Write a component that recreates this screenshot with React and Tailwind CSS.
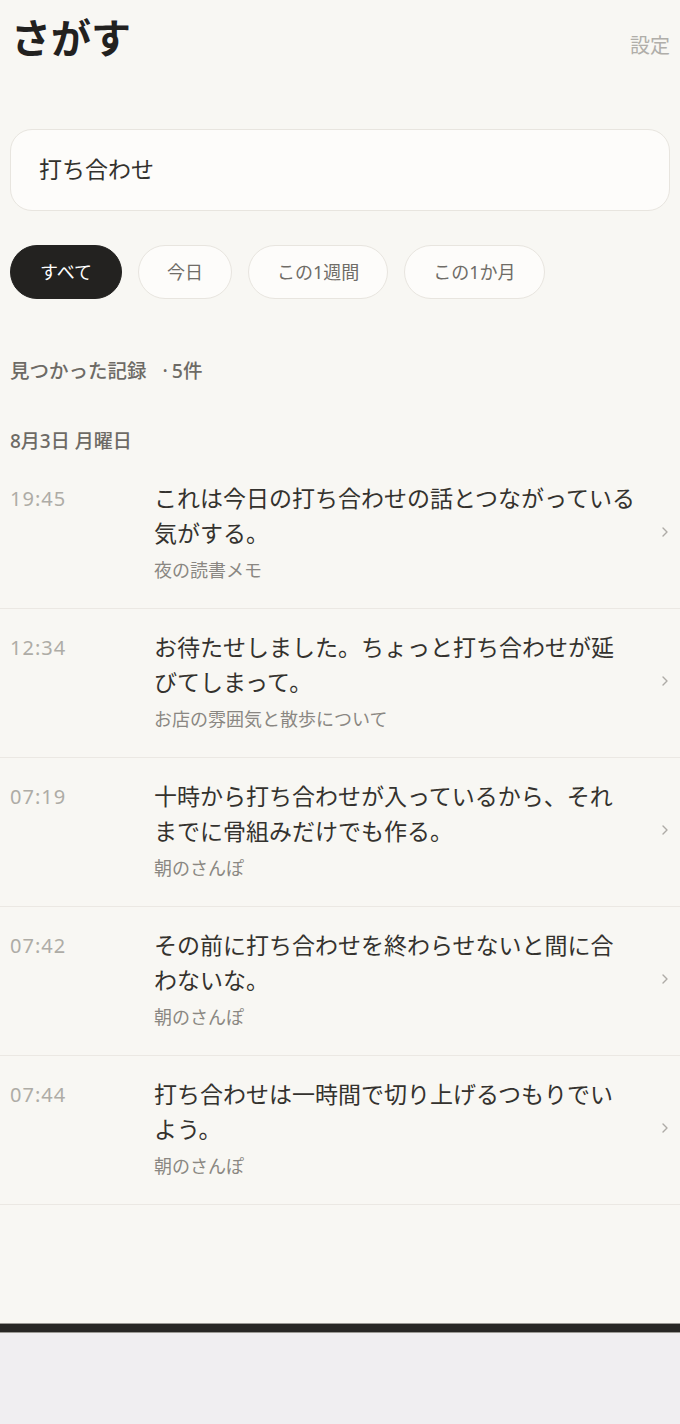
import React, { useState } from "react";

const results = [
  {
    time: "19:45",
    lines: ["これは今日の打ち合わせの話とつながっている", "気がする。"],
    source: "夜の読書メモ",
  },
  {
    time: "12:34",
    lines: ["お待たせしました。ちょっと打ち合わせが延", "びてしまって。"],
    source: "お店の雰囲気と散歩について",
  },
  {
    time: "07:19",
    lines: ["十時から打ち合わせが入っているから、それ", "までに骨組みだけでも作る。"],
    source: "朝のさんぽ",
  },
  {
    time: "07:42",
    lines: ["その前に打ち合わせを終わらせないと間に合", "わないな。"],
    source: "朝のさんぽ",
  },
  {
    time: "07:44",
    lines: ["打ち合わせは一時間で切り上げるつもりでい", "よう。"],
    source: "朝のさんぽ",
  },
];

const filters = ["すべて", "今日", "この1週間", "この1か月"];

const Chevron = () => (
  <svg width="8" height="14" viewBox="0 0 8 14" fill="none" className="shrink-0">
    <path d="M2 3l4 4-4 4" stroke="#aeaba6" strokeWidth="1.4" strokeLinecap="round" strokeLinejoin="round" />
  </svg>
);

const App = () => {
  const [query, setQuery] = useState("打ち合わせ");
  const [active, setActive] = useState("すべて");

  return (
    <div
      className="flex flex-col h-[1424px] bg-[#f0eef1]"
      style={{ fontFamily: '"Noto Sans", "Noto Sans CJK JP", sans-serif' }}
    >
      <div className="flex-1 bg-[#f8f7f3]">
        {/* header */}
        <div className="flex justify-between items-start pl-[11px] pr-[10px] pt-[12px]">
          <h1 className="text-[40px] leading-[52px] font-bold text-[#22211f]">さがす</h1>
          <button className="mt-[20px] text-[20px] leading-[28px] text-[#b0aea9]">設定</button>
        </div>

        {/* search */}
        <div className="px-[10px] mt-[65px]">
          <input
            value={query}
            onChange={(e) => setQuery(e.target.value)}
            className="w-full h-[82px] rounded-[22px] border border-[#e8e5df] bg-[#fdfcfa] px-[28px] pb-[4px] text-[23px] text-[#33312d] outline-none"
          />
        </div>

        {/* filters */}
        <div className="flex gap-[16px] px-[10px] mt-[34px]">
          {filters.map((f) => (
            <button
              key={f}
              onClick={() => setActive(f)}
              className={
                active === f
                  ? "h-[54px] px-[29px] rounded-full bg-[#232220] text-white text-[18px] border border-[#232220]"
                  : "h-[54px] px-[28px] rounded-full bg-[#fdfcfa] text-[#6f6c67] text-[18px] border border-[#e8e5df]"
              }
            >
              {f}
            </button>
          ))}
        </div>

        <p className="px-[10px] mt-[60px] text-[19.5px] leading-[24px] font-medium text-[#6d6a65]">
          見つかった記録<span className="ml-[16px] mr-[4px]">·</span>5件
        </p>
        <p className="px-[10px] mt-[46px] text-[19px] leading-[24px] font-medium text-[#6d6a65]">
          8月3日 月曜日
        </p>

        {/* results */}
        <ul className="mt-[7px]">
          {results.map((r, i) => (
            <li key={i} className="flex pl-[10px] pr-[11px] pt-[21px] pb-[26px] border-b border-[#ebe8e3]">
              <span className="w-[144px] shrink-0 text-[20px] leading-[35px] text-[#aeaca6] tracking-[0.05em]">
                {r.time}
              </span>
              <div className="flex-1">
                {r.lines.map((l, j) => (
                  <p key={j} className="text-[23px] leading-[35px] text-[#34322e] whitespace-nowrap">
                    {l}
                  </p>
                ))}
                <p className="mt-[7px] text-[18px] leading-[24px] text-[#8a8782]">{r.source}</p>
              </div>
              <div className="self-center">
                <Chevron />
              </div>
            </li>
          ))}
        </ul>
      </div>
      <div className="h-[10px] bg-[#282725] border-y border-[#9a9894]" />
      <div className="h-[91px] bg-[#f0eef1]" />
    </div>
  );
};

export default App;
